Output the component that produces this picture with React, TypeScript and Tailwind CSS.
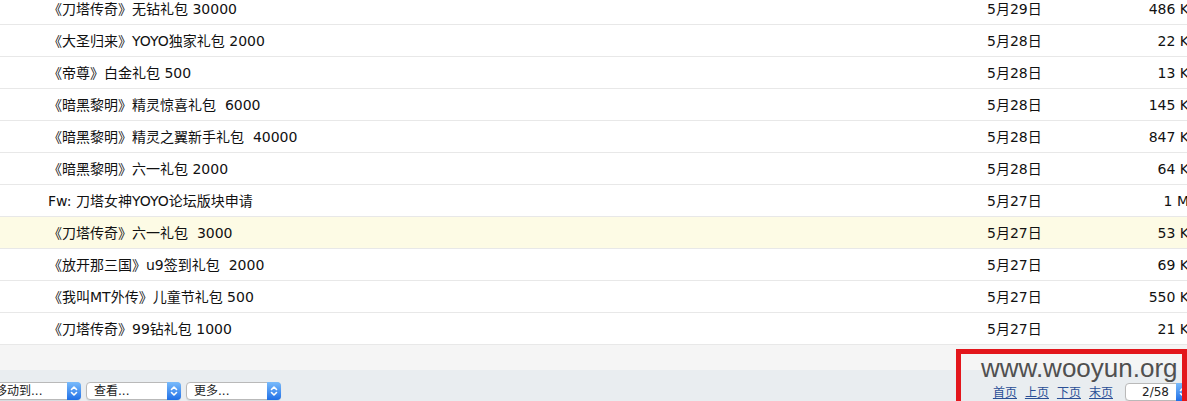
import React from "react";

const rows = [
  { subject: "《刀塔传奇》无钻礼包 30000", date: "5月29日", size: "486 K" },
  { subject: "《大圣归来》YOYO独家礼包 2000", date: "5月28日", size: "22 K" },
  { subject: "《帝尊》白金礼包 500", date: "5月28日", size: "13 K" },
  { subject: "《暗黑黎明》精灵惊喜礼包  6000", date: "5月28日", size: "145 K" },
  { subject: "《暗黑黎明》精灵之翼新手礼包  40000", date: "5月28日", size: "847 K" },
  { subject: "《暗黑黎明》六一礼包 2000", date: "5月28日", size: "64 K" },
  { subject: "Fw: 刀塔女神YOYO论坛版块申请", date: "5月27日", size: "1 M" },
  { subject: "《刀塔传奇》六一礼包  3000", date: "5月27日", size: "53 K", active: true },
  { subject: "《放开那三国》u9签到礼包  2000", date: "5月27日", size: "69 K" },
  { subject: "《我叫MT外传》儿童节礼包 500", date: "5月27日", size: "550 K" },
  { subject: "《刀塔传奇》99钻礼包 1000", date: "5月27日", size: "21 K" },
];

const Arrows = () => (
  <svg width="8" height="12" viewBox="0 0 8 12" fill="none" stroke="white" strokeWidth="1.6" strokeLinecap="round" strokeLinejoin="round">
    <path d="M1.5 4.5 L4 2 L6.5 4.5" />
    <path d="M1.5 7.5 L4 10 L6.5 7.5" />
  </svg>
);

const Select = ({ label, className = "", right = false }: { label: string; className?: string; right?: boolean }) => (
  <div
    className={`relative flex h-[18px] items-center rounded-[4px] border border-[#b9b9b9] bg-white text-[12px] text-[#222] shadow-[0_1px_1px_rgba(0,0,0,0.08)] ${className}`}
  >
    <span className={`flex-1 whitespace-nowrap ${right ? "pr-[7px] text-right" : "pl-[7px]"}`}>{label}</span>
    <div className="flex h-[18px] w-[14px] -my-px -mr-px items-center justify-center rounded-r-[4px] bg-gradient-to-b from-[#79bbfb] to-[#1f6fe6]">
      <Arrows />
    </div>
  </div>
);

export default function App() {
  return (
    <div className="relative h-[401px] w-[1187px] overflow-hidden bg-white font-['DejaVu_Sans','Noto_Sans_CJK_SC',sans-serif] text-[14px] text-[#111]">
      <div className="-mt-[7px] w-[1189px]">
        {rows.map((r, i) => (
          <div
            key={i}
            className={`flex h-[32px] items-center border-b border-[#e8e8e8] pt-px ${r.active ? "bg-[#fdfbe5]" : "bg-white"}`}
          >
            <div className="w-[987px] whitespace-pre pl-[48px]">{r.subject}</div>
            <div className="w-[120px]">{r.date}</div>
            <div className="flex-1 text-right">{r.size}</div>
          </div>
        ))}
      </div>

      <div className="h-[25px] bg-[#f5f5f5]" />

      <div className="flex h-[31px] w-[1190px] items-start bg-[#e9edf0] pt-[12px] font-['Lucida_Grande','DejaVu_Sans','Noto_Sans_CJK_SC',sans-serif]">
        <div className="-ml-[13px] flex gap-[5px]">
          <Select label="移动到..." className="w-[94px]" />
          <Select label="查看..." className="w-[95px]" />
          <Select label="更多..." className="w-[95px]" />
        </div>
        <div className="ml-auto flex items-start">
          <div className="mt-[2px] flex gap-[8px] text-[12px] text-[#2a4f96] underline">
            <a>首页</a>
            <a>上页</a>
            <a>下页</a>
            <a>末页</a>
          </div>
          <Select label="2/58" right className="ml-[12px] mt-px w-[65px]" />
        </div>
      </div>

      <div className="absolute left-[956px] top-[349px] h-[70px] w-[231px] border-[5px] border-[#e3161c]" />
      <div className="absolute left-[981px] top-[355px] font-['Liberation_Sans',sans-serif] text-[26px] leading-none text-[#505050]">
        www.wooyun.org
      </div>
    </div>
  );
}
